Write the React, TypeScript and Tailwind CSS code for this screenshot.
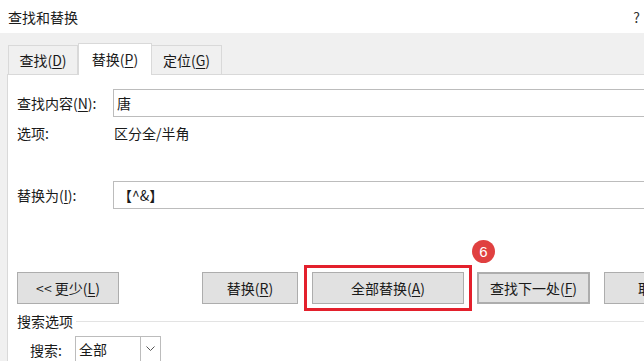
import React from "react";

const F = { fontFamily: '"Microsoft YaHei UI","Noto Sans CJK SC","Noto Sans",sans-serif' };

function U({ children }: { children: React.ReactNode }) {
  return <span className="underline underline-offset-2 decoration-1">{children}</span>;
}

function Btn({ children, className = "" }: { children: React.ReactNode; className?: string }) {
  return (
    <div
      className={
        "h-[32px] flex items-center justify-center bg-[#e1e1e1] border border-[#adadad] text-[14px] text-[#1a1a1a] shrink-0 " +
        className
      }
    >
      {children}
    </div>
  );
}

export default function App() {
  return (
    <div className="w-[644px] h-[361px] overflow-hidden bg-[#f0f0f0] flex flex-col text-[#1a1a1a]" style={F}>
      {/* Title bar */}
      <div className="h-[33px] bg-white flex items-center justify-between pl-[8px] pr-[4px] shrink-0">
        <span className="text-[14px] leading-none">查找和替换</span>
        <span className="text-[14px] leading-none text-[#333]">?</span>
      </div>
      {/* Tabs */}
      <div className="h-[41px] flex items-end pl-[8px] shrink-0">
        <div className="h-[29px] w-[70px] border border-b-0 border-[#d9d9d9] flex items-center justify-center text-[14px] bg-[#f0f0f0]">
          查找(<U>D</U>)
        </div>
        <div className="h-[32px] w-[74px] border border-b-0 border-[#d9d9d9] bg-white flex items-center justify-center text-[14px] -mb-px relative z-10">
          替换(<U>P</U>)
        </div>
        <div className="h-[29px] w-[70px] border border-b-0 border-l-0 border-[#d9d9d9] flex items-center justify-center text-[14px] bg-[#f0f0f0]">
          定位(<U>G</U>)
        </div>
      </div>
      {/* Panel */}
      <div className="flex-1 ml-[7px] bg-white border-l border-t border-[#d9d9d9] pl-[9px] flex flex-col">
        <div className="mt-[14px] flex items-center h-[28px]">
          <div className="w-[96px] text-[14px]">
            查找内容(<U>N</U>):
          </div>
          <div className="flex-1 h-[28px] border border-[#bcbcbc] -mr-[10px] flex items-center pl-[3px] text-[14px]">
            唐
          </div>
        </div>
        <div className="mt-[6px] flex items-center h-[20px] text-[14px]">
          <div className="w-[97px]">选项:</div>
          <div>区分全/半角</div>
        </div>
        <div className="mt-[38px] flex items-center h-[28px]">
          <div className="w-[96px] text-[14px]">
            替换为(<U>I</U>):
          </div>
          <div className="flex-1 h-[28px] border border-[#bcbcbc] -mr-[10px] flex items-center pl-[4px] text-[14px]">
            【^&amp;】
          </div>
        </div>
        <div className="mt-[63px] flex items-center h-[32px]">
          <Btn className="w-[102px]">
            &lt;&lt; 更少(<U>L</U>)
          </Btn>
          <Btn className="w-[96px] ml-[83px]">
            替换(<U>R</U>)
          </Btn>
          <div className="relative ml-[14px] shrink-0">
            <Btn className="w-[152px]">
              全部替换(<U>A</U>)
            </Btn>
            <span className="absolute -left-[8px] -right-[8px] -top-[7px] -bottom-[7px] border-[3px] border-[#e3202c] pointer-events-none" />
          </div>
          <div className="relative ml-[13px] shrink-0">
            <Btn className="w-[113px] border-2 border-[#0078d7]">
              查找下一处(<U>F</U>)
            </Btn>
            <span className="absolute -top-[32px] left-[-5px] w-[23px] h-[23px] rounded-full bg-[#e04040] text-white text-[15px] flex items-center justify-center leading-none" style={{ fontFamily: '"Liberation Sans",Arial,sans-serif' }}>
              6
            </span>
          </div>
          <Btn className="w-[96px] ml-[14px]">取消</Btn>
        </div>
        <div className="mt-[6px] flex items-center h-[22px]">
          <span className="text-[14px]">搜索选项</span>
          <div className="flex-1 h-px bg-[#e3e3e3] ml-[3px]" />
        </div>
        <div className="mt-[4px] flex items-start pl-[13px]">
          <span className="text-[14px] mt-[4px] w-[45px]">搜索:</span>
          <div className="w-[86px] h-[26px] border border-[#bcbcbc] flex">
            <div className="flex-1 pl-[3px] text-[14px] leading-[24px]">全部</div>
            <div className="w-[20px] border-l border-[#bcbcbc] flex items-center justify-center">
              <svg width="9" height="6" viewBox="0 0 9 6" fill="none">
                <path d="M0.5 0.5 L4.5 4.5 L8.5 0.5" stroke="#555" strokeWidth="1" />
              </svg>
            </div>
          </div>
        </div>
      </div>
    </div>
  );
}
